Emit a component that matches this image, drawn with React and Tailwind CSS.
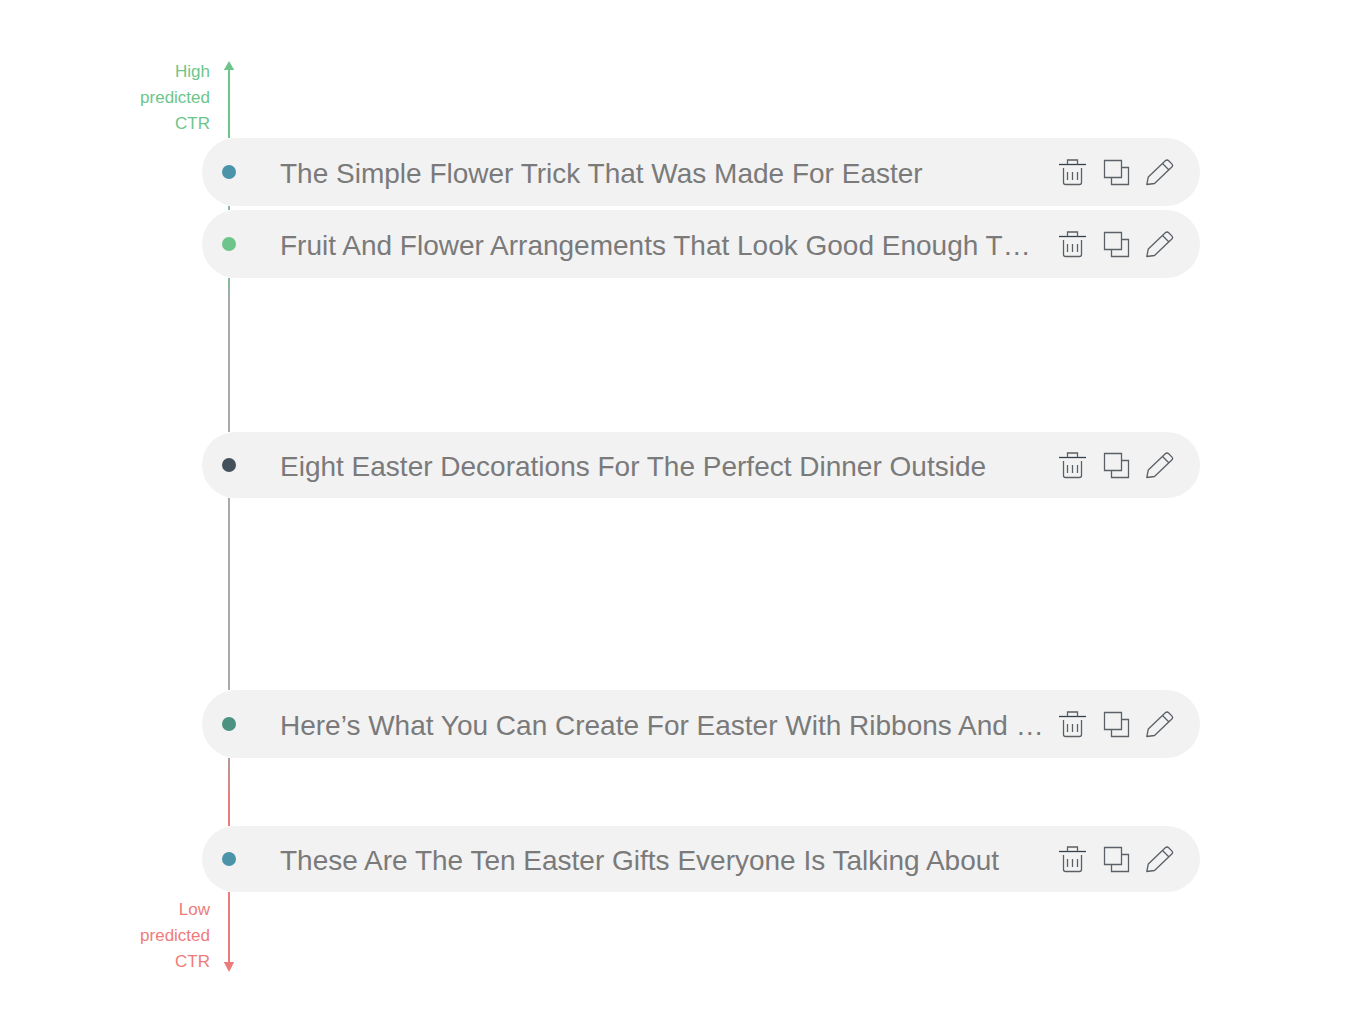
const headlines = [
  {
    title: 'The Simple Flower Trick That Was Made For Easter',
    dot: 'bg-[#4a93a9]',
    height: 'h-[68px]',
    rail: 'h-1 bg-[#8fb79f]',
  },
  {
    title: 'Fruit And Flower Arrangements That Look Good Enough T…',
    dot: 'bg-[#6dc58b]',
    height: 'h-[68px]',
    rail: 'h-[154px] bg-linear-to-b from-[#7fbd98] to-[#aaaaaa] to-15%',
  },
  {
    title: 'Eight Easter Decorations For The Perfect Dinner Outside',
    dot: 'bg-[#43515c]',
    height: 'h-[66px]',
    rail: 'h-[192px] bg-[#aaaaaa]',
  },
  {
    title: 'Here’s What You Can Create For Easter With Ribbons And …',
    dot: 'bg-[#4b9280]',
    height: 'h-[68px]',
    rail: 'h-[68px] bg-linear-to-b from-[#b09a9a] to-[#ee7b7b] to-60%',
  },
  {
    title: 'These Are The Ten Easter Gifts Everyone Is Talking About',
    dot: 'bg-[#4a93a9]',
    height: 'h-[66px]',
  },
];

export default function App() {
  return (
    <main className="min-h-screen bg-white pt-[59px] pr-[168px] pb-[60px] pl-[136px] font-['Liberation_Sans',Arial,sans-serif]">
      <div className="flex text-[#6dc58b]">
        <AxisLabel lines={['High', 'predicted', 'CTR']} />
        <div className="ml-[13px] flex w-3 flex-col items-center pt-0.5">
          <svg viewBox="0 0 12 9" className="h-[9px] w-3 shrink-0" fill="currentColor" aria-hidden="true">
            <path d="M6 0 11.2 9H.8Z" />
          </svg>
          <div className="w-0.5 grow bg-current" />
        </div>
      </div>

      <ul className="ml-[66px]">
        {headlines.map((h) => (
          <li key={h.title}>
            <HeadlineRow {...h} />
            {h.rail && <div className={`ml-[26px] w-0.5 ${h.rail}`} />}
          </li>
        ))}
      </ul>

      <div className="flex h-20 text-[#ee7b7b]">
        <AxisLabel lines={['Low', 'predicted', 'CTR']} low />
        <div className="ml-[13px] flex w-3 flex-col items-center">
          <div className="w-0.5 grow bg-current" />
          <svg viewBox="0 0 12 10" className="h-2.5 w-3 shrink-0" fill="currentColor" aria-hidden="true">
            <path d="M.8 0H11.2L6 10Z" />
          </svg>
        </div>
      </div>
    </main>
  );
}

function AxisLabel({ lines, low }) {
  return (
    <p className={`w-[74px] text-right text-[17px] leading-[26px] ${low ? 'pt-[5px]' : 'pb-px'}`}>
      {lines.map((line) => (
        <span key={line} className="block">{line}</span>
      ))}
    </p>
  );
}

function HeadlineRow({ title, dot, height }) {
  return (
    <div className={`flex items-center rounded-full bg-[#f2f2f2] pr-[26px] pl-5 ${height}`}>
      <span className={`size-3.5 shrink-0 rounded-full ${dot}`} />
      <span className="ml-11 min-w-0 grow truncate pt-1 text-[28px] leading-9 text-[#7a7a7a]">{title}</span>
      <div className="ml-2 flex shrink-0 gap-4 text-[#5a6066]">
        <IconButton label="Delete headline">
          <path d="M1 6.500h27" stroke="#33414e" />
          <path d="M9.500 6.500v-4.500h10v4.500M5.500 10v14.500q0 2 2 2h14q2 0 2-2V10" />
          <path d="M9.500 14v8M14.500 14v8M19.500 14v8" />
        </IconButton>
        <IconButton label="Duplicate headline">
          <path d="M2.500 2.500h17v17h-17zM19.500 9.500h7v17h-17v-7" />
        </IconButton>
        <IconButton label="Edit headline">
          <path d="M.8 26.500 2.300 19 19.300 2.800q1.700-1.500 3.400 0l3.300 3.300q1.300 1.600-.2 3L8.500 25.500.8 26.500ZM16.500 5.500l6 6" strokeLinejoin="round" />
        </IconButton>
      </div>
    </div>
  );
}

function IconButton({ label, children }) {
  return (
    <button type="button" aria-label={label} className="size-7">
      <svg viewBox="0 0 28 28" className="size-7" fill="none" stroke="currentColor" strokeWidth="1.3">
        {children}
      </svg>
    </button>
  );
}
